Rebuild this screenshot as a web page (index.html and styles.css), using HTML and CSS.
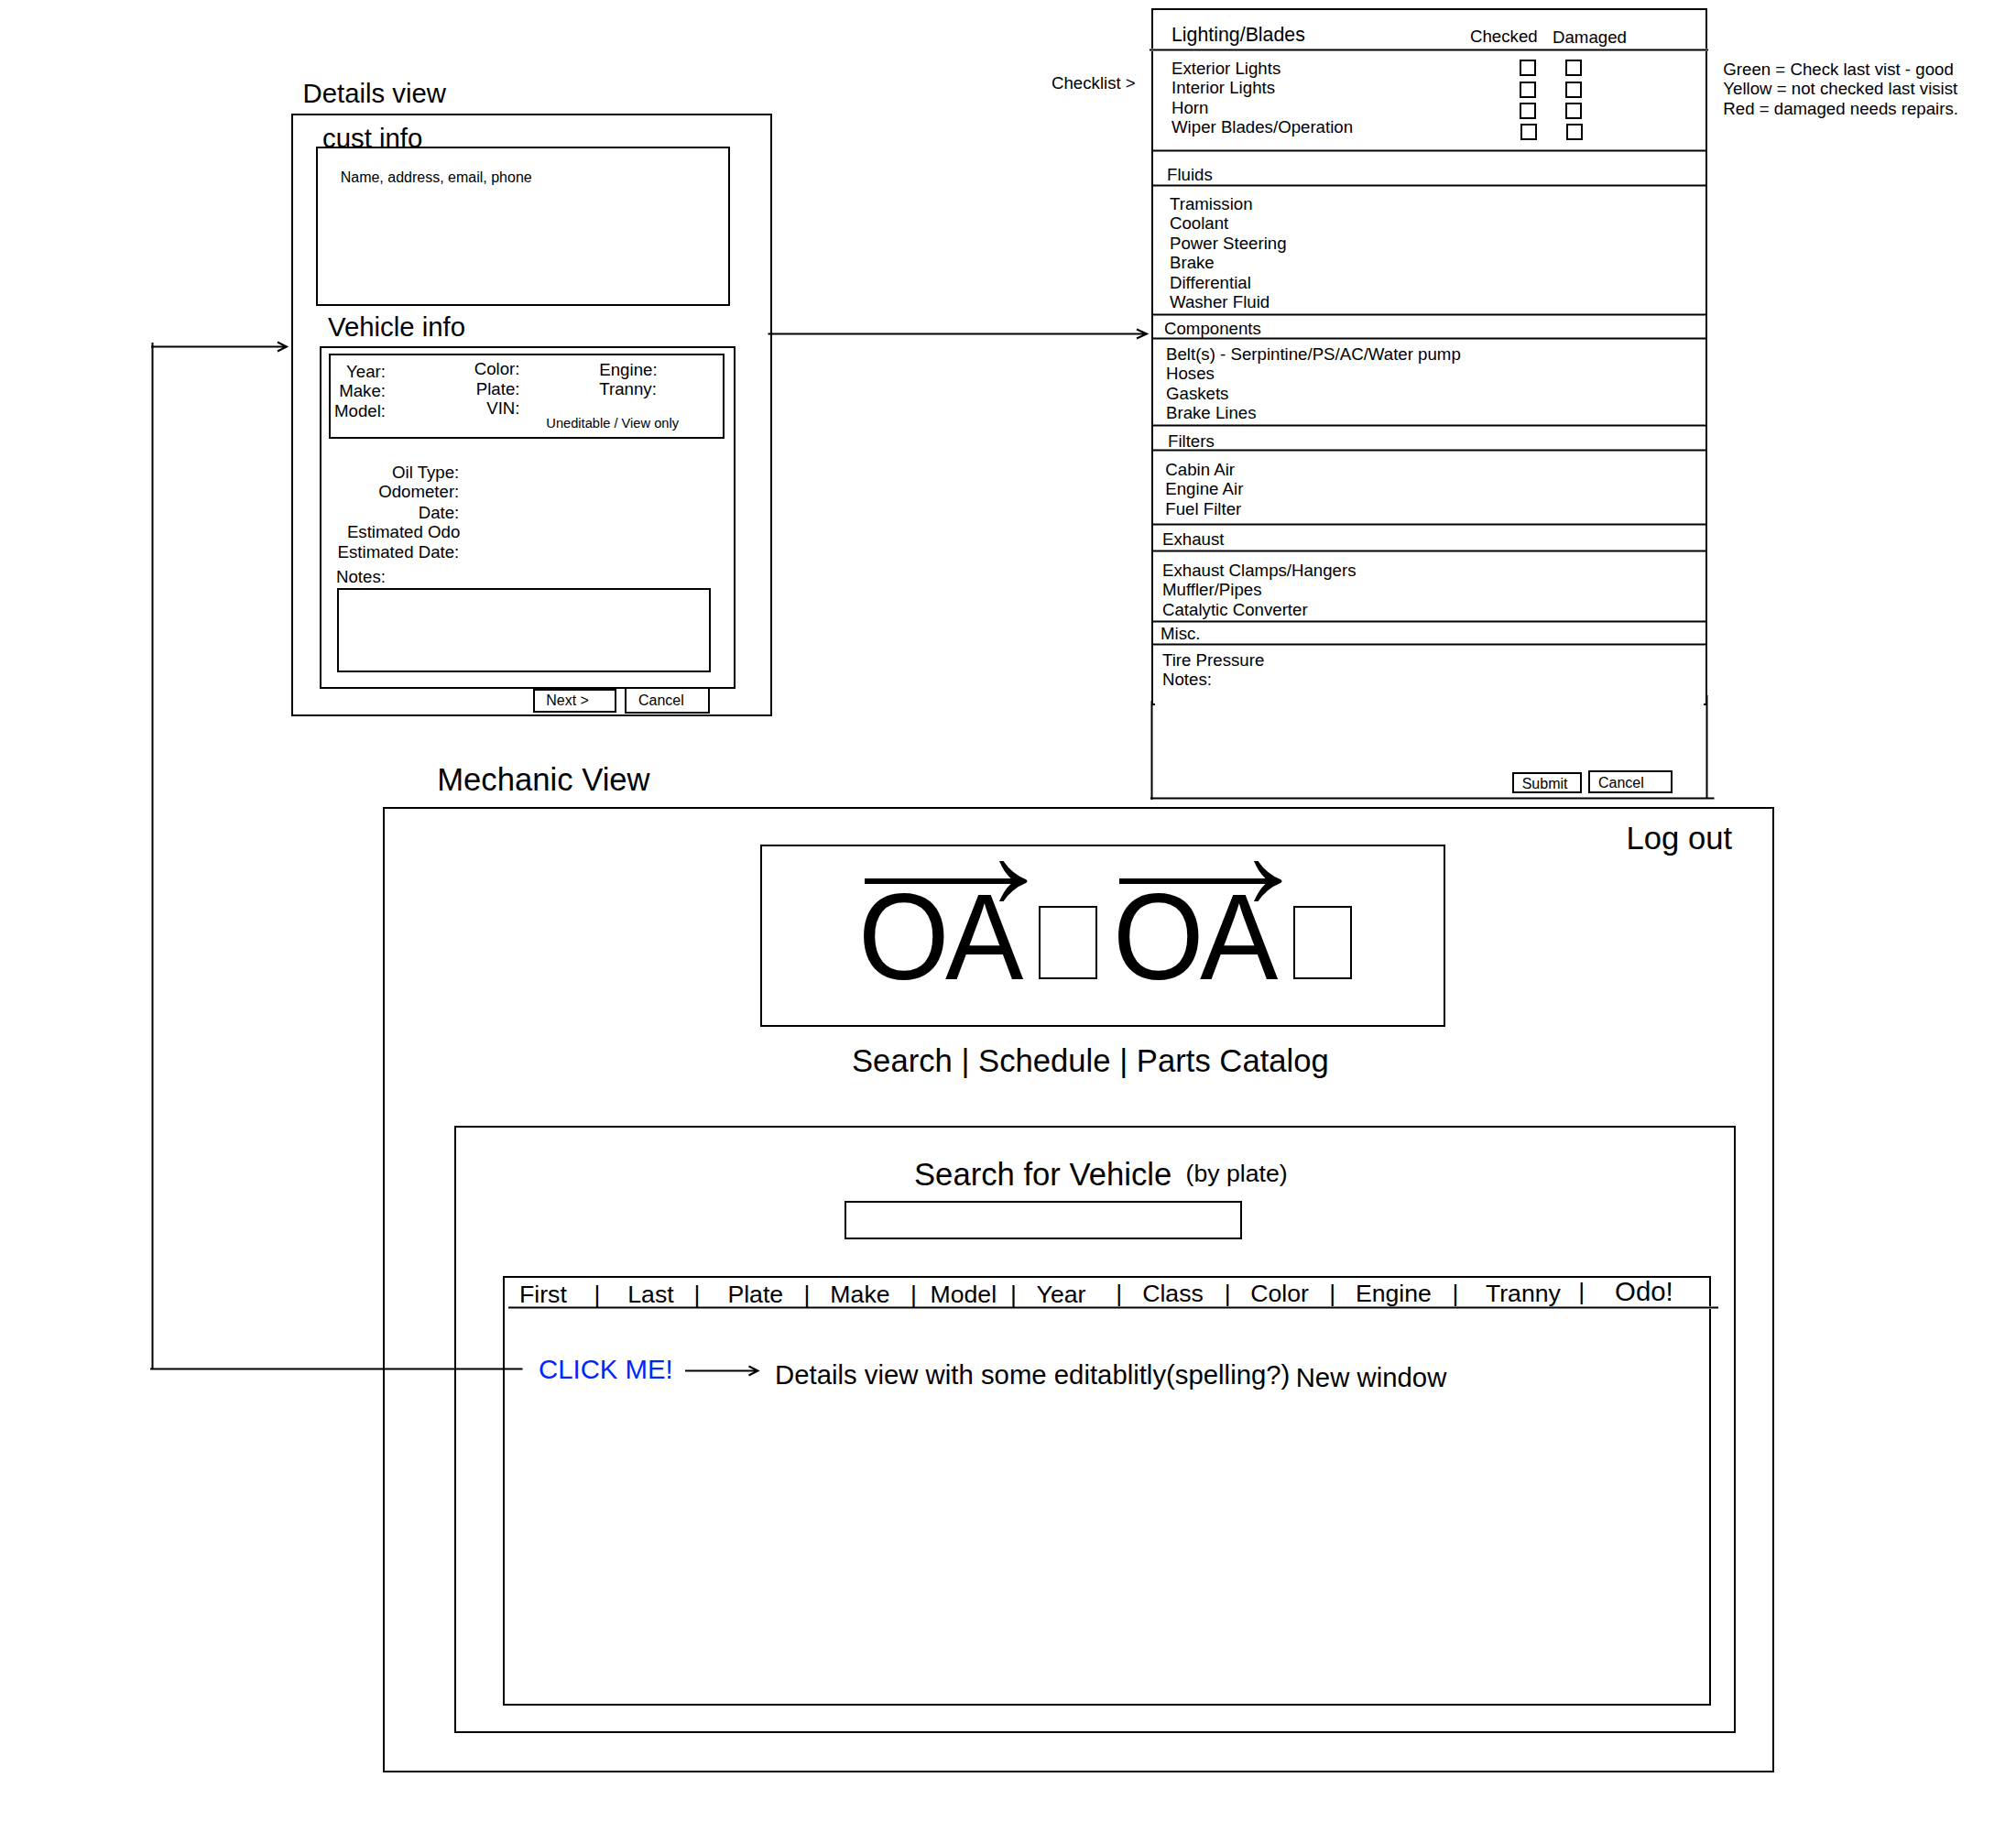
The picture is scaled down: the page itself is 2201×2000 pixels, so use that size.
FILE: index.html
```html
<!DOCTYPE html>
<html lang="en">
<head>
<meta charset="utf-8">
<title>Mechanic View wireframe</title>
<link rel="stylesheet" href="styles.css">
</head>
<body>
<main class="canvas">

  <h1 class="label t22 label-details">Details view</h1>
  <section class="window details">
    <h2 class="t22 cust-title">cust info</h2>
    <div class="box cust-box t12">Name, address, email, phone</div>
    <h2 class="t22 vehicle-title">Vehicle info</h2>
    <div class="box vehicle-box">
      <div class="box specs t14">
        <ul class="list spec-a"><li>Year:</li><li>Make:</li><li>Model:</li></ul>
        <ul class="list spec-b"><li>Color:</li><li>Plate:</li><li>VIN:</li></ul>
        <div class="spec-c">
          <ul class="list"><li>Engine:</li><li>Tranny:</li></ul>
          <p class="t11">Uneditable / View only</p>
        </div>
      </div>
      <ul class="list fields t14">
        <li>Oil Type:</li><li>Odometer:</li><li class="date">Date:</li><li class="odo">Estimated Odo</li><li>Estimated Date:</li>
      </ul>
      <p class="t14 notes-label">Notes:</p>
      <div class="box notes-box"></div>
    </div>
    <div class="details-actions t12">
      <div class="box btn-next">Next &gt;</div>
      <div class="box btn-back">Cancel</div>
    </div>
  </section>

  <p class="label t14 label-checklist">Checklist &gt;</p>
  <section class="window checklist">
    <div class="sheet">
      <header class="sheet-head">
        <h2 class="t16">Lighting/Blades</h2>
        <span class="t14 col-checked">Checked</span>
        <span class="t14 col-damaged">Damaged</span>
      </header>
      <div class="rule rule-wide"></div>
      <div class="lights">
        <ul class="list t14"><li>Exterior Lights</li><li>Interior Lights</li><li>Horn</li><li>Wiper Blades/Operation</li></ul>
        <div class="checks"><i></i><i></i><i></i><i></i></div>
        <div class="checks"><i></i><i></i><i></i><i></i></div>
      </div>
      <div class="rule"></div>
      <h3 class="t14 head-fluids">Fluids</h3>
      <div class="rule"></div>
      <ul class="list t14 list-fluids"><li>Tramission</li><li>Coolant</li><li>Power Steering</li><li>Brake</li><li>Differential</li><li>Washer Fluid</li></ul>
      <div class="rule"></div>
      <h3 class="t14 head-components">Components</h3>
      <div class="rule"></div>
      <ul class="list t14 list-components"><li>Belt(s) - Serpintine/PS/AC/Water pump</li><li>Hoses</li><li>Gaskets</li><li>Brake Lines</li></ul>
      <div class="rule"></div>
      <h3 class="t14 head-filters">Filters</h3>
      <div class="rule"></div>
      <ul class="list t14 list-filters"><li>Cabin Air</li><li>Engine Air</li><li>Fuel Filter</li></ul>
      <div class="rule"></div>
      <h3 class="t14 head-exhaust">Exhaust</h3>
      <div class="rule"></div>
      <ul class="list t14 list-exhaust"><li>Exhaust Clamps/Hangers</li><li>Muffler/Pipes</li><li>Catalytic Converter</li></ul>
      <div class="rule"></div>
      <h3 class="t14 head-misc">Misc.</h3>
      <div class="rule"></div>
      <ul class="list t14 list-misc"><li>Tire Pressure</li><li>Notes:</li></ul>
    </div>
    <footer class="sheet-actions t12">
      <div class="box btn-submit">Submit</div>
      <div class="box btn-cancel">Cancel</div>
    </footer>
  </section>
  <ul class="label list t14 label-legend">
    <li>Green = Check last vist - good</li>
    <li>Yellow = not checked last visist</li>
    <li>Red = damaged needs repairs.</li>
  </ul>

  <h1 class="label t26 label-mechanic">Mechanic View</h1>
  <section class="window mechanic">
    <p class="t26 logout">Log out</p>
    <div class="box logo">
      <div class="mark">
        <span class="mark-text"><span class="mark-o">O</span>A</span><span class="mark-box"></span>
        <svg class="mark-arrow" width="178" height="45" viewBox="0 0 178 45"><path d="M0 19H159.500Q152 12 147 0H151.500Q161 14 176 20Q179 22 176 24Q161 30 151.500 44H147Q152 32 159.500 25H0Z"/></svg>
      </div>
      <div class="mark">
        <span class="mark-text"><span class="mark-o">O</span>A</span><span class="mark-box"></span>
        <svg class="mark-arrow" width="178" height="45" viewBox="0 0 178 45"><path d="M0 19H159.500Q152 12 147 0H151.500Q161 14 176 20Q179 22 176 24Q161 30 151.500 44H147Q152 32 159.500 25H0Z"/></svg>
      </div>
    </div>
    <nav class="t26 nav">Search | Schedule | Parts Catalog</nav>
    <div class="box search">
      <div class="search-head">
        <h2 class="t26">Search for Vehicle</h2>
        <span class="t20">(by plate)</span>
      </div>
      <div class="box search-input"></div>
      <div class="box results">
        <div class="columns t20">
          <span>First</span><span>|</span><span>Last</span><span>|</span><span>Plate</span><span>|</span><span>Make</span><span>|</span><span>Model</span><span>|</span><span>Year</span><span class="up1">|</span><span class="up1">Class</span><span class="up1">|</span><span class="up1">Color</span><span class="up1">|</span><span class="up1">Engine</span><span class="up1">|</span><span class="up1">Tranny</span><span class="up3">|</span><span class="t22 odo-col">Odo!</span>
        </div>
        <div class="rule rule-results"></div>
        <div class="result-row t22">
          <span class="click">CLICK ME!</span>
          <span class="hint">Details view with some editablitly(spelling?)</span>
          <span class="new-window">New window</span>
        </div>
      </div>
    </div>
  </section>

  <svg class="connectors" width="2201" height="2000" viewBox="0 0 2201 2000">
    <!-- result row to details view -->
    <path d="M164 1494.500H570.500M166.500 1494.500V374M165 378.500H312M303 373.500L313 378.500L303 383.500"/>
    <!-- details view to checklist -->
    <path d="M838.500 364.500H1251M1241 359.500L1252 364.500L1241 369.500"/>
    <!-- click me to note -->
    <path d="M748 1496.500H827M817.500 1491.500L827.500 1496.500L817.500 1501.500"/>
    <!-- lower part of the checklist sheet -->
    <path d="M1257.500 765V873M1863.500 759V871M1256 871.500H1871.500M1259 769H1261M1860 769H1862"/>
  </svg>
</main>
</body>
</html>
```
FILE: styles.css
```css
* { box-sizing: border-box; }

body {
  margin: 0;
  background: #fff;
  color: #000;
  font-family: "Liberation Sans", Arial, sans-serif;
}

h1, h2, h3, p, ul { margin: 0; padding: 0; font-weight: normal; }

.canvas {
  position: relative;
  width: 2201px;
  height: 2000px;
  overflow: hidden;
  white-space: nowrap;
}

/* type scale, in points */
.t11 { font-size: 11pt; line-height: 16px; }
.t12 { font-size: 12pt; line-height: 17px; }
.t14 { font-size: 14pt; line-height: 21px; }
.t16 { font-size: 16pt; line-height: 24px; }
.t20 { font-size: 20pt; line-height: 30px; }
.t22 { font-size: 22pt; line-height: 33px; }
.t26 { font-size: 26pt; line-height: 38px; }

.list { list-style: none; line-height: 21.4px; }
.box { border: 2px solid #000; background: #fff; }
.rule {
  height: 3px;
  border: solid #808080;
  border-width: 1px 0;
  background: #000;
}

/* items on the canvas */
.window, .label, .connectors { position: absolute; }
.label-details { left: 330.5px; top: 85px; }
.label-checklist { left: 1148px; top: 80px; }
.label-legend { left: 1881.3px; top: 65px; }
.label-mechanic { left: 477.2px; top: 832px; }
.connectors {
  left: 0;
  top: 0;
  fill: none;
  stroke: #000;
  stroke-width: 2;
}

/* details window */
.details {
  left: 318px;
  top: 124px;
  width: 525px;
  height: 658px;
  border: 2px solid #000;
}
.cust-title { margin: 8px 0 0 32px; height: 26px; }
.cust-box {
  position: relative;
  width: 452px;
  height: 174px;
  margin-left: 25px;
  padding: 23px 0 0 24.7px;
}
.vehicle-title { margin: 6px 0 5px 38px; }
.vehicle-box {
  position: relative;
  z-index: 1;
  width: 454px;
  height: 374px;
  margin-left: 29px;
}
.specs {
  display: flex;
  width: 432px;
  height: 93px;
  margin: 6px 0 0 8px;
}
.spec-a { width: 60px; padding-top: 7px; text-align: right; }
.spec-b { width: 146.5px; padding-top: 4.2px; text-align: right; }
.spec-c { padding-left: 28.8px; }
.spec-c .list { height: 66px; padding: 5px 0 0 58px; }
.fields { width: 150.3px; margin-top: 26px; text-align: right; }
.fields .date { margin-top: 1px; }
.fields .odo { margin-right: -1px; }
.notes-label { margin: 6px 0 2px 16px; }
.notes-box { width: 408px; height: 92px; margin-left: 17px; }
.details-actions {
  display: flex;
  align-items: flex-start;
  gap: 9px;
  padding-left: 262px;
}
.btn-next { width: 91px; height: 26px; padding: 2px 0 0 12.2px; }
.btn-back { width: 93px; height: 29px; margin-top: -2px; padding: 4px 0 0 13px; }

/* checklist window */
.checklist { left: 1257px; top: 9px; width: 607px; }
.sheet {
  height: 761px;
  border: 2px solid #000;
  border-bottom: 0;
}
.sheet-head { display: flex; height: 42px; padding: 15px 0 0 20px; }
.sheet-head h2 { width: 326px; }
.col-checked { width: 90px; margin-top: 3px; }
.col-damaged { margin-top: 4px; }
.rule-wide { margin: 0 -3px 0 -4px; }
.lights { display: flex; height: 107px; padding: 8px 0 0 20px; }
.lights .list { width: 380px; }
.checks {
  display: flex;
  flex-direction: column;
  gap: 5px;
  width: 50px;
  padding-top: 1px;
}
.checks i { width: 18px; height: 18px; border: 2px solid #000; }
.checks i:first-child { margin-bottom: 1px; }
.checks i:last-child { margin-left: 1px; }
.head-fluids { height: 35px; padding: 14px 0 0 15px; }
.list-fluids { height: 138px; padding: 8px 0 0 18px; }
.head-components { height: 23px; padding: 3px 0 0 12px; }
.list-components { height: 92px; padding: 5px 0 0 14px; }
.head-filters { height: 24px; padding: 5px 0 0 16px; }
.list-filters { height: 78px; padding: 9px 0 0 13.3px; }
.head-exhaust { height: 26px; padding: 4px 0 0 10px; }
.list-exhaust { height: 74px; padding: 9px 0 0 10px; }
.head-misc { height: 22px; padding: 1px 0 0 8px; }
.list-misc { padding: 5px 0 0 10px; }
.sheet-actions {
  display: flex;
  align-items: flex-end;
  gap: 7px;
  height: 96px;
  padding-left: 394px;
}
.btn-submit { width: 76px; height: 23px; padding: 2px 0 0 8.7px; }
.btn-cancel { width: 92px; height: 25px; padding: 3px 0 0 9px; }

/* mechanic window */
.mechanic {
  left: 418px;
  top: 881px;
  width: 1519px;
  height: 1054px;
  border: 2px solid #000;
}
.logout { height: 26px; margin: 13px 0 0 1355.5px; }
.logo {
  display: flex;
  width: 748px;
  height: 199px;
  margin-left: 410px;
  padding: 29px 0 0 104px;
}
.mark { position: relative; display: flex; width: 278px; }
.mark-text {
  width: 198px;
  padding-left: 1px;
  font-size: 96pt;
  line-height: 143px;
  transform: scaleY(1.04);
  transform-origin: 0 116px;
}
.mark-o { letter-spacing: -4.5px; }
.mark-box { width: 64px; height: 80px; margin-top: 36px; border: 2px solid #000; }
.mark-arrow { position: absolute; left: 8px; top: -13px; }
.nav { margin: 18px 0 0 510px; }
.search { width: 1399px; height: 663px; margin: 52px 0 0 76px; }
.search-head { display: flex; padding: 32px 0 0 500px; }
.search-head h2 { width: 296.6px; }
.search-head span { margin-top: 3px; }
.search-input { width: 434px; height: 42px; margin: 10px 0 0 424px; }
.results { width: 1319px; height: 469px; margin: 40px 0 0 51px; }
.columns {
  display: grid;
  grid-template-columns:
    81.5px 36.8px 72.2px 36.9px 83.1px 28.9px 87.6px 21.5px 87.5px 28.6px
    86.8px 28.8px 89.5px 28.5px 86.2px 28.6px 105.7px 36.3px 101.4px 39.8px 80px;
  height: 31px;
  padding: 3px 0 0 16px;
}
.up1 { margin-top: -1px; }
.up3 { margin-top: -3px; }
.odo-col { margin-top: -5px; }
.rule-results { margin: 0 -9.5px 0 3.5px; }
.result-row { display: flex; padding: 49px 0 0 37px; }
.click { width: 258px; color: #0026ff; }
.hint { width: 568.7px; margin-top: 6px; }
.new-window { margin-top: 9px; }
```
